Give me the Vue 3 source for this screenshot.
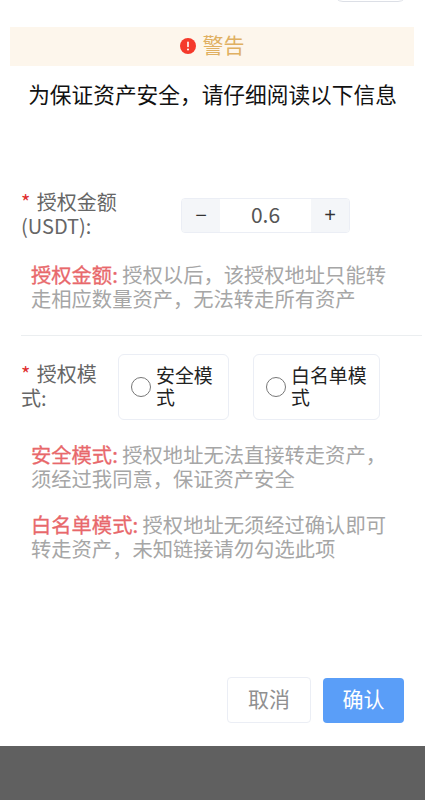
<script setup>
const modes = [
  { key: 'safe', label: '安全模式', width: '111px' },
  { key: 'white', label: '白名单模式', width: '127px' },
]
</script>

<template>
  <div class="page">
    <div class="top"><span class="pill"></span></div>
    <div class="banner">
      <svg class="alert" viewBox="0 0 16 16" width="16" height="16">
        <circle cx="8" cy="8" r="8" fill="#f5392b" />
        <rect x="7.2" y="3.6" width="1.6" height="5.6" rx="0.8" fill="#fff" />
        <circle cx="8" cy="11.4" r="1" fill="#fff" />
      </svg>
      <span class="banner-text">警告</span>
    </div>
    <h1 class="heading">为保证资产安全，请仔细阅读以下信息</h1>

    <div class="row amount">
      <div class="label amount-label"><span class="star">*</span> 授权金额<br />(USDT):</div>
      <div class="stepper">
        <span class="step">−</span>
        <span class="value">0.6</span>
        <span class="step">+</span>
      </div>
    </div>
    <p class="note first"><b>授权金额:</b> 授权以后，该授权地址只能转走相应数量资产，无法转走所有资产</p>
    <div class="divider"></div>

    <div class="row mode">
      <div class="label mode-label"><span class="star">*</span> 授权模式:</div>
      <div class="options">
        <div v-for="m in modes" :key="m.key" class="option" :style="{ width: m.width }">
          <span class="radio"></span>
          <span class="option-text">{{ m.label }}</span>
        </div>
      </div>
    </div>
    <p class="note second"><b>安全模式:</b> 授权地址无法直接转走资产，须经过我同意，保证资产安全</p>
    <p class="note third"><b>白名单模式:</b> 授权地址无须经过确认即可转走资产，未知链接请勿勾选此项</p>

    <div class="actions">
      <button class="btn cancel">取消</button>
      <button class="btn ok">确认</button>
    </div>
    <div class="footer"></div>
  </div>
</template>

<style scoped>
.page {
  width: 425px;
  height: 800px;
  display: flex;
  flex-direction: column;
  background: #fff;
  overflow: hidden;
  font-family: "Noto Sans CJK SC", "Noto Sans", sans-serif;
}
.top {
  height: 2px;
  display: flex;
  justify-content: flex-end;
  padding-right: 17px;
  overflow: hidden;
  align-items: flex-end;
}
.pill {
  width: 75px;
  height: 20px;
  border: 1px solid #dcdfe6;
  border-radius: 10px;
  box-sizing: border-box;
}
.banner {
  margin: 25px 11px 0 10px;
  height: 39px;
  box-sizing: border-box;
  padding-bottom: 2px;
  background: #fdf6ec;
  color: #e0b062;
  font-size: 21px;
  display: flex;
  align-items: center;
  justify-content: center;
  gap: 7px;
}
.banner-text {
  margin-bottom: 3px;
}
.heading {
  margin: 12px 0 0;
  text-align: center;
  font-size: 21.7px;
  font-weight: 400;
  line-height: 32px;
  color: #111;
  white-space: nowrap;
}
.row {
  display: flex;
  margin-left: 21px;
}
.amount {
  margin-top: 80px;
}
.label {
  font-size: 20px;
  line-height: 24px;
  color: #666;
}
.amount-label {
  width: 160px;
}
.star {
  color: #e02d2d;
  margin-right: 2px;
}
.stepper {
  width: 169px;
  height: 35px;
  box-sizing: border-box;
  margin-top: 8px;
  display: flex;
  border: 1px solid #ebeef5;
  border-radius: 4px;
  overflow: hidden;
  color: #555;
}
.step {
  width: 38px;
  background: #f4f6f9;
  font-size: 20px;
  display: flex;
  align-items: center;
  justify-content: center;
  font-family: "Liberation Sans", sans-serif;
  color: #333;
}
.value {
  flex: 1;
  text-align: center;
  font-size: 21px;
  line-height: 31px;
}
.note {
  margin: 0 0 0 31px;
  width: 365px;
  font-size: 20.3px;
  line-height: 23.6px;
  color: #a6a6a6;
}
.note b {
  font-weight: 400;
  color: #e8686b;
  -webkit-text-stroke: 0.3px #e8686b;
}
.first {
  margin-top: 25px;
}
.divider {
  margin: 25px 3px 0 21px;
  height: 1px;
  background: #ebeef0;
}
.mode {
  margin-top: 18px;
}
.mode-label {
  width: 97px;
  padding-top: 8px;
}
.options {
  display: flex;
  gap: 24px;
}
.option {
  height: 66px;
  box-sizing: border-box;
  border: 1px solid #ebeef5;
  border-radius: 6px;
  display: flex;
  align-items: center;
  padding: 0 11px 0 12px;
  gap: 5px;
  font-size: 18.9px;
  line-height: 22.5px;
  color: #222;
}
.radio {
  flex: none;
  box-sizing: border-box;
  width: 20px;
  height: 20px;
  border: 1px solid #777;
  border-radius: 50%;
}
.option-text {
  min-width: 0;
  margin-bottom: 2px;
}
.second {
  margin-top: 23px;
}
.third {
  margin-top: 23px;
}
.actions {
  margin-top: auto;
  display: flex;
  justify-content: flex-end;
  gap: 12px;
  padding-right: 21px;
  margin-bottom: 23px;
}
.btn {
  height: 45px;
  border-radius: 4px;
  font-size: 21px;
  font-family: inherit;
  padding: 0 0 5px;
}
.cancel {
  width: 84px;
  height: 46px;
  background: #fff;
  border: 1px solid #ebeef5;
  color: #909090;
}
.ok {
  width: 81px;
  margin-top: 1px;
  background: #5a9ef8;
  border: none;
  color: #fff;
}
.footer {
  height: 54px;
  flex: none;
  background: #606060;
}
</style>
